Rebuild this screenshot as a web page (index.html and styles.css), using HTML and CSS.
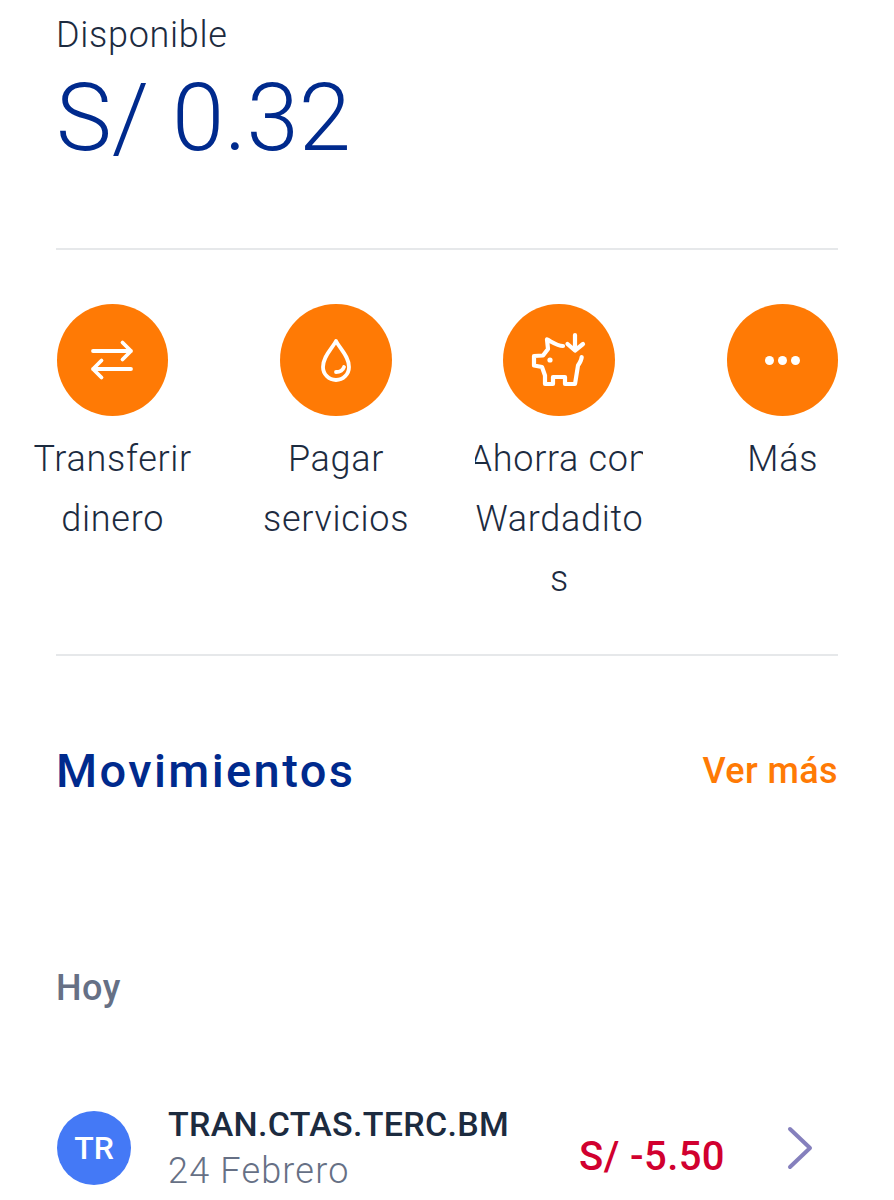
FILE: index.html
```html
<!DOCTYPE html>
<html lang="es">
<head>
    <meta charset="UTF-8">
    <meta name="viewport" content="width=device-width, initial-scale=1.0">
    <title>Disponible</title>
    <link rel="stylesheet" href="styles.css">
</head>
<body>
    <section class="balance">
        <div class="balance-label">Disponible</div>
        <div class="balance-amount">S/ 0.32</div>
    </section>
    <hr class="divider">
    <nav class="actions">
        <div class="action">
            <span class="action-icon">
                <svg viewBox="0 0 48 48" width="48" height="48" fill="none" stroke="#fff" stroke-width="3.8" stroke-linecap="round" stroke-linejoin="round">
                    <path d="M5 15h38M34.500 6.500l8.500 8.500-8.500 8.500"/>
                    <path d="M43 33H5M13.500 24.500L5 33l8.500 8.500"/>
                </svg>
            </span>
            <div class="action-label"><span>Transferir</span><span>dinero</span></div>
        </div>
        <div class="action">
            <span class="action-icon">
                <svg viewBox="0 0 48 48" width="48" height="48" fill="none" stroke="#fff" stroke-width="3.8" stroke-linecap="round" stroke-linejoin="round">
                    <path d="M24 5c4 8 13 15 13 26a13 13 0 0 1-26 0C11 20 20 13 24 5z"/>
                    <path d="M24 36c4 0 7-2 8-5"/>
                </svg>
            </span>
            <div class="action-label"><span>Pagar</span><span>servicios</span></div>
        </div>
        <div class="action">
            <span class="action-icon">
                <svg viewBox="0 0 56 56" width="56" height="56" fill="none" stroke="#fff" stroke-width="4.2" stroke-linecap="round" stroke-linejoin="round">
                    <path d="M32 14c-6 0-11-4-16-6.500L17 17l-5 6.500-9 .5v9.500l8 1.500 3 8.500V52h8v-7h12v7h10l3-18.500c2-3 3.500-5.500 3.700-8.500"/>
                    <path d="M44 3v15.500M36.500 12l7.500 6.500 8-6.500"/>
                    <circle cx="19" cy="28" r="2.600" fill="#fff" stroke="none"/>
                </svg>
            </span>
            <div class="action-label"><span>Ahorra con</span><span>Wardadito</span><span>s</span></div>
        </div>
        <div class="action">
            <span class="action-icon">
                <span class="dots"><i></i><i></i><i></i></span>
            </span>
            <div class="action-label"><span>Más</span></div>
        </div>
    </nav>
    <hr class="divider">
    <div class="section-head">
        <h2>Movimientos</h2>
        <a class="see-more">Ver más</a>
    </div>
    <div class="day">Hoy</div>
    <div class="movement">
        <span class="avatar">TR</span>
        <div class="movement-info">
            <div class="movement-name">TRAN.CTAS.TERC.BM</div>
            <div class="movement-date">24 Febrero</div>
        </div>
        <div class="movement-amount">S/ -5.50</div>
        <svg class="chevron" viewBox="0 0 26 44" width="26" height="44" fill="none" stroke="#8580bd" stroke-width="4" stroke-linecap="round" stroke-linejoin="round">
            <path d="M3 3l20 19L3 41"/>
        </svg>
    </div>
</body>
</html>
```
FILE: styles.css
```css
html, body {
    height: 1200px;
    overflow: hidden;
}
body {
    margin: 0;
    padding: 0 56px;
    background-color: #fff;
    font-family: "Roboto", "Liberation Sans", sans-serif;
    color: #1c2b3f;
}
.balance {
    height: 248px;
    overflow: hidden;
}
.balance-label {
    margin-top: 14px;
    font-size: 36px;
    font-weight: 300;
    letter-spacing: 0.7px;
    line-height: 42px;
}
.balance-amount {
    margin-top: 7px;
    font-size: 94px;
    font-weight: 300;
    line-height: 110px;
    color: #002a8d;
}
.divider {
    margin: 0;
    border: 0;
    border-top: 2px solid #e6e8ea;
}
.actions {
    display: flex;
    justify-content: space-between;
    height: 404px;
    margin-right: -0.3px;
    padding: 54px 0 0 0.7px;
    box-sizing: border-box;
}
.action {
    width: 111.5px;
}
.action-icon {
    display: flex;
    align-items: center;
    justify-content: center;
    width: 111.5px;
    height: 112px;
    border-radius: 50%;
    background-color: #ff7a05;
}
.dots {
    display: flex;
    gap: 4px;
}
.dots i {
    width: 9px;
    height: 9px;
    border-radius: 50%;
    background-color: #fff;
}
.action-label {
    width: 168px;
    margin: 13px 0 0 -28px;
    overflow: hidden;
    font-size: 36px;
    font-weight: 300;
    letter-spacing: 0.7px;
    line-height: 60px;
}
.action-label span {
    display: flex;
    justify-content: center;
    white-space: nowrap;
}
.section-head {
    display: flex;
    align-items: center;
    justify-content: space-between;
    margin-top: 84px;
    height: 60px;
}
.section-head h2 {
    margin: 0;
    font-size: 47px;
    font-weight: 500;
    letter-spacing: 2.4px;
    color: #002a8d;
}
.see-more {
    margin-top: 2px;
    font-size: 36px;
    font-weight: 500;
    letter-spacing: 0.4px;
    color: #ff7a05;
}
.day {
    margin-top: 166px;
    font-size: 36px;
    font-weight: 500;
    letter-spacing: 0.5px;
    line-height: 44px;
    color: #667085;
}
.movement {
    display: flex;
    align-items: center;
    margin-top: 92px;
    padding-right: 25px;
}
.avatar {
    display: flex;
    align-items: center;
    justify-content: center;
    flex-shrink: 0;
    width: 74px;
    height: 74px;
    margin-left: 1px;
    border-radius: 50%;
    background-color: #4479f6;
    color: #fff;
    font-size: 32px;
    font-weight: 500;
}
.movement-info {
    flex: 1;
    margin-left: 37px;
}
.movement-name {
    font-size: 34px;
    font-weight: 500;
    letter-spacing: 0.3px;
    line-height: 44px;
}
.movement-date {
    margin-top: 2px;
    font-size: 36px;
    font-weight: 300;
    letter-spacing: 1.2px;
    line-height: 46px;
    color: #667085;
}
.movement-amount {
    margin: 16px 62px 0 0;
    font-size: 40px;
    font-weight: 500;
    letter-spacing: 0.4px;
    color: #d1002f;
}
.chevron {
    flex-shrink: 0;
}
```
